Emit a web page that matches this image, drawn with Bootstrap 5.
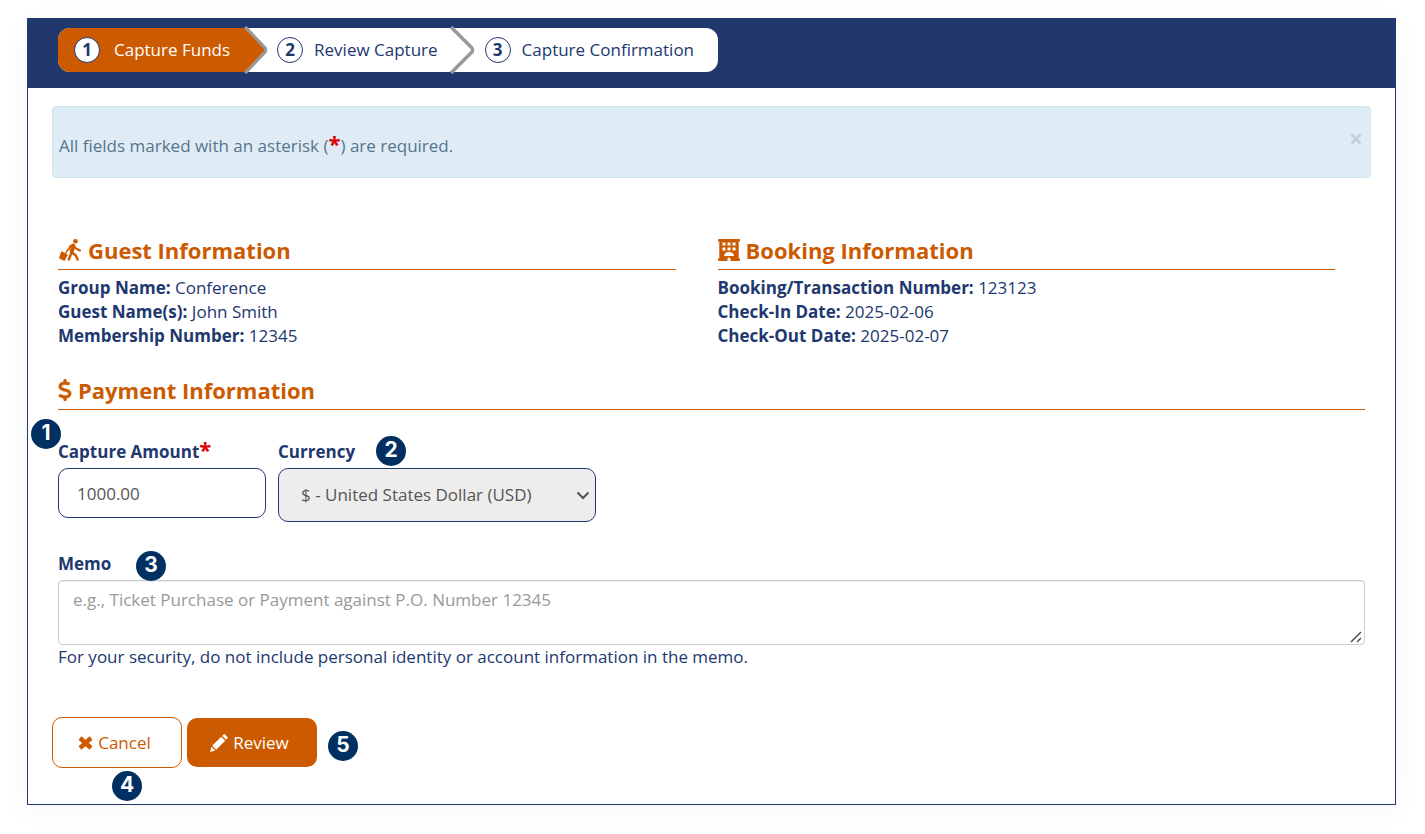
<!DOCTYPE html>
<html lang="en">
<head>
<meta charset="utf-8">
<meta name="viewport" content="width=device-width, initial-scale=1">
<title>Capture Funds</title>
<link href="https://cdn.jsdelivr.net/npm/bootstrap@5.3.0/dist/css/bootstrap.min.css" rel="stylesheet">
<style>
:root { --navy: #21386f; --burnt: #cc5a00; --note: #003061; }
body { font-family: "Open Sans", "Noto Sans", sans-serif; font-size: 17px; line-height: 24px; color: var(--navy); background: #fff; }
.panel { margin: 18px 29px 28px 27px; border: 1px solid var(--navy); background: #fff; box-shadow: 0 6px 30px rgba(0,0,0,.04); }
.panel-top { background: var(--navy); padding: 9px 30px 16px; }
.steps { background: #fff; border-radius: 12px; height: 44px; }
.step { height: 44px; gap: 11px; padding: 0 13px 0 32px; color: var(--navy); text-decoration: none; }
.step.current { background: var(--burnt); color: #fff; border-radius: 12px 0 0 12px; gap: 14px; padding: 0 15px 0 16px; }
.step:last-child { padding: 0 24px 0 34px; }
.step-no { width: 26px; height: 26px; border: 1px solid var(--navy); background: #fff; color: var(--navy); font-weight: 700; }
.chevron { position: absolute; left: 100%; top: -2px; margin-left: -7px; z-index: 2; }
.panel-body { padding: 18px 24px 36px; }
.notice { background: #dfecf5; border: 1px solid #cbe8ef; border-radius: 4px; color: #56748f; padding: 27px 6px 19px; margin-bottom: 59px; }
.notice .dismiss { position: absolute; right: 8px; top: 26px; width: 12px; height: 12px; line-height: 0; color: #bed0e0; }
.req { color: #dc0000; font-weight: 700; font-size: 22px; line-height: 16px; }
.section-title { font-size: 22px; line-height: 26px; font-weight: 700; color: var(--burnt); border-bottom: 1px solid var(--burnt); padding-bottom: 6px; margin-bottom: 6px; gap: 6px; }
.section-title svg { flex: none; }
.info { padding: 0 36px 0 6px; }
.fields { padding: 0 6px; }
.capture-form { margin-top: 29px; }
.field-row { gap: 12px; padding-top: 24px; }
.field-label { font-weight: 700; display: block; margin-bottom: 4px; }
.amount { width: 208px; height: 50px; border: 1px solid var(--navy); border-radius: 10px; padding: 0 18px; font-size: 17px; color: #555; }
.currency { width: 318px; height: 54px; border: 1px solid var(--navy); border-radius: 10px; padding: 0 32px 0 22px; font-size: 17px; color: #555;
  --bs-form-select-bg-img: url("data:image/svg+xml,%3csvg xmlns='http://www.w3.org/2000/svg' viewBox='0 0 14 14'%3e%3cpath fill='none' stroke='%23505050' stroke-width='2' d='M1.500 4.500l5.500 5.500 5.500-5.500'/%3e%3c/svg%3e");
  background-image: url("data:image/svg+xml,%3csvg xmlns='http://www.w3.org/2000/svg' viewBox='0 0 14 14'%3e%3cpath fill='none' stroke='%23505050' stroke-width='2' d='M1.500 4.500l5.500 5.500 5.500-5.500'/%3e%3c/svg%3e");
  background-position: right 5px center; background-size: 14px 14px; }
.currency:disabled { background-color: #ededed; color: #555; opacity: 1; }
.memo-group { margin-top: 30px; }
.memo { height: 65px; min-height: 65px; border: 1px solid #ccc; border-radius: 4px; padding: 7px 14px; font-size: 17px; line-height: 24px; box-shadow: inset 0 1px 1px rgba(0,0,0,.075); }
.memo::placeholder { color: #999; }
.memo::-webkit-resizer { background: url("data:image/svg+xml,%3csvg xmlns='http://www.w3.org/2000/svg' viewBox='0 0 15 15'%3e%3cpath fill='none' stroke='%23505050' stroke-width='1.500' d='M2 13L12 3M8 13L12 9'/%3e%3c/svg%3e") center / 15px 15px no-repeat; }
.actions { gap: 5px; margin-top: 48px; }
.act { width: 130px; height: 51px; border-radius: 10px; font-size: 17px; gap: 5px; padding: 0 5px 0 0; line-height: 24px; }
.act-cancel { border: 1px solid var(--burnt); color: var(--burnt); background: #fff; }
.act-review { height: 49px; background: var(--burnt); color: #fff; }
.act-cancel:hover { background: #fbeee4; color: var(--burnt); }
.act-review:hover { background: #b34f00; color: #fff; }
/* Numbered callouts laid over the form */
.callout { position: absolute; width: 30px; height: 30px; border-radius: 50%; background: var(--note); color: #fff; font: 700 21px/28px Inter, "Liberation Sans", sans-serif; text-align: center; z-index: 3; }
.at-amount { left: -27px; top: -21px; }
.at-currency { left: 98px; top: -4px; }
.at-memo { left: 78px; top: -1px; }
.at-cancel { left: 60px; top: 54px; }
.at-review { left: 141px; top: 13px; }
</style>
</head>
<body>
<main class="panel">
  <header class="panel-top d-flex">
    <nav class="steps d-flex" aria-label="Progress">
      <a href="#" class="step current position-relative d-flex align-items-center" aria-current="step">
        <span class="step-no rounded-circle d-flex align-items-center justify-content-center">1</span>Capture Funds
        <svg class="chevron" width="30" height="48" viewBox="0 0 30 48" aria-hidden="true"><path d="M7 1L27 22Q28 24 27 26L7 47" fill="none" stroke="#999" stroke-width="3.500"/><path d="M0 2H6L26 23Q26.500 24 26 25L6 46H0z" fill="#cc5a00"/></svg>
      </a>
      <a href="#" class="step position-relative d-flex align-items-center">
        <span class="step-no rounded-circle d-flex align-items-center justify-content-center">2</span>Review Capture
        <svg class="chevron" width="31" height="48" viewBox="0 0 31 48" aria-hidden="true"><path d="M7 1L28 22Q29 24 28 26L7 47" fill="none" stroke="#999" stroke-width="3.500"/></svg>
      </a>
      <a href="#" class="step d-flex align-items-center">
        <span class="step-no rounded-circle d-flex align-items-center justify-content-center">3</span>Capture Confirmation
      </a>
    </nav>
  </header>

  <div class="panel-body">
    <div class="notice position-relative" role="alert">
      All fields marked with an asterisk (<span class="req">*</span>) are required.
      <button type="button" class="dismiss border-0 bg-transparent p-0" aria-label="Close">
        <svg width="12" height="12" viewBox="0 0 12 12"><path d="M1.500 1.500L10.500 10.500M10.500 1.500L1.500 10.500" stroke="currentColor" stroke-width="2.600"/></svg>
      </button>
    </div>

    <div class="row g-0">
      <section class="col-6 info">
        <h2 class="section-title d-flex align-items-center">
          <svg width="24" height="24" viewBox="-1 0 24 24" fill="none" stroke="currentColor" stroke-linecap="round" stroke-linejoin="round" aria-hidden="true">
            <circle cx="16.500" cy="3.300" r="2.300" fill="currentColor" stroke="none"/>
            <path d="M10 11.500L11 8.200L14.500 7L17 10.500L21 12.500" stroke-width="2"/>
            <path d="M14.200 7.500L12.800 14" stroke-width="4"/>
            <path d="M12 16L9.800 21.500" stroke-width="2.400"/>
            <path d="M13 14.500L16.800 17.500L18.600 21.600" stroke-width="2.400"/>
            <path d="M2.800 14L8 17.200L5.200 22.200L.8 19.800z" fill="currentColor" stroke-width="1.400"/>
            <path d="M6 16.500L8.800 11.500" stroke-width="1.500"/>
          </svg>Guest Information</h2>
        <div><strong>Group Name:</strong> Conference</div>
        <div><strong>Guest Name(s):</strong> John Smith</div>
        <div><strong>Membership Number:</strong> 12345</div>
      </section>
      <section class="col-6 info">
        <h2 class="section-title d-flex align-items-center">
          <svg width="22" height="22" viewBox="0 0 22 22" fill="currentColor" aria-hidden="true"><path fill-rule="evenodd" d="M1 0H21Q22 0 22 1V2.500H20.700V19.500H22V21Q22 22 21 22H12.500V19.500Q11 17.500 9.500 19.500V22H1Q0 22 0 21V19.500H1.300V2.500H0V1Q0 0 1 0zM4.500 3.500V6.500H7.500V3.500zM9.500 3.500V6.500H12.500V3.500zM14.500 3.500V6.500H17.500V3.500zM4.500 8.500V11.500H7.500V8.500zM9.500 8.500V11.500H12.500V8.500zM14.500 8.500V11.500H17.500V8.500zM6 17H16Q15.500 13 11 13T6 17z"/></svg>Booking Information</h2>
        <div><strong>Booking/Transaction Number:</strong> 123123</div>
        <div><strong>Check-In Date:</strong> 2025-02-06</div>
        <div><strong>Check-Out Date:</strong> 2025-02-07</div>
      </section>
    </div>

    <form class="capture-form">
      <div class="fields">
        <h2 class="section-title d-flex align-items-center">
          <svg width="14" height="22" viewBox="0 0 320 512" fill="currentColor" stroke="currentColor" stroke-width="12" aria-hidden="true"><path d="M160 0c17.700 0 32 14.300 32 32V67.700c1.600 .2 3.100 .4 4.700 .7c.4 .1 .7 .1 1.100 .2l48 8.800c17.400 3.200 28.900 19.900 25.700 37.200s-19.900 28.900-37.200 25.700l-47.500-8.700c-31.300-4.600-58.900-1.500-78.300 6.200s-27.200 18.300-29 28.100c-2 10.700-.5 16.700 1.200 20.400c1.800 3.900 5.500 8.300 12.800 13.200c16.300 10.700 41.300 17.700 73.700 26.300l2.900 .8c28.600 7.600 63.600 16.800 89.600 33.800c14.200 9.300 27.600 21.900 35.900 39.500c8.500 17.900 10.300 37.900 6.400 59.200c-6.900 38-33.100 63.400-65.600 76.700c-13.700 5.600-28.600 9.200-44.400 11V480c0 17.700-14.300 32-32 32s-32-14.300-32-32V445.100c-.4-.1-.9-.1-1.300-.2l-.2 0c-24.400-3.800-64.500-14.300-91.500-26.300c-16.100-7.200-23.400-26.100-16.200-42.200s26.100-23.400 42.200-16.200c20.900 9.300 55.300 18.500 75.200 21.600c31.900 4.700 58.200 2 76-5.300c16.900-6.900 24.600-16.900 26.800-28.900c1.900-10.600 .4-16.700-1.300-20.400c-1.900-4-5.600-8.400-13-13.300c-16.400-10.700-41.500-17.700-74-26.300l-2.800-.7C119.400 279.300 84.400 270 58.400 253c-14.200-9.300-27.500-22-35.800-39.600c-8.400-17.900-10.100-37.900-6.100-59.200C23.700 116 52.300 91.200 84.800 78.300c13.300-5.300 27.900-8.900 43.200-11V32c0-17.700 14.300-32 32-32z"/></svg>Payment Information</h2>

        <div class="field-row d-flex align-items-start">
          <div class="position-relative">
            <label class="field-label" for="amount">Capture Amount<span class="req">*</span></label>
            <input class="amount form-control" id="amount" type="text" value="1000.00">
            <span class="callout at-amount">1</span>
          </div>
          <div class="position-relative">
            <label class="field-label" for="currency">Currency</label>
            <select class="currency form-select" id="currency" disabled><option>$ - United States Dollar (USD)</option></select>
            <span class="callout at-currency">2</span>
          </div>
        </div>

        <div class="memo-group position-relative">
          <label class="field-label" for="memo">Memo</label>
          <textarea class="memo form-control" id="memo" placeholder="e.g., Ticket Purchase or Payment against P.O. Number 12345" aria-describedby="memo-help"></textarea>
          <div id="memo-help">For your security, do not include personal identity or account information in the memo.</div>
          <span class="callout at-memo">3</span>
        </div>
      </div>

      <div class="actions d-flex align-items-center">
        <div class="position-relative">
          <button type="button" class="btn act act-cancel d-flex align-items-center justify-content-center"><svg width="15" height="14" viewBox="0 0 15 14" aria-hidden="true"><path d="M2 2L13 12M13 2L2 12" stroke="currentColor" stroke-width="4.400"/></svg>Cancel</button>
          <span class="callout at-cancel">4</span>
        </div>
        <div class="position-relative">
          <button type="submit" class="btn act act-review d-flex align-items-center justify-content-center"><svg width="18" height="18" viewBox="0 0 18 18" fill="currentColor" aria-hidden="true"><path d="M0 18L1.500 12.800L5.200 16.500zM2.200 11.800L11.300 2.800L15.200 6.700L6.200 15.700zM12.300 1.800L13.500 .6Q14.200 0 15 .6L17.400 3Q18 3.800 17.400 4.500L16.200 5.700z"/></svg>Review</button>
          <span class="callout at-review">5</span>
        </div>
      </div>
    </form>
  </div>
</main>
<script src="https://cdn.jsdelivr.net/npm/bootstrap@5.3.0/dist/js/bootstrap.bundle.min.js"></script>
</body>
</html>
